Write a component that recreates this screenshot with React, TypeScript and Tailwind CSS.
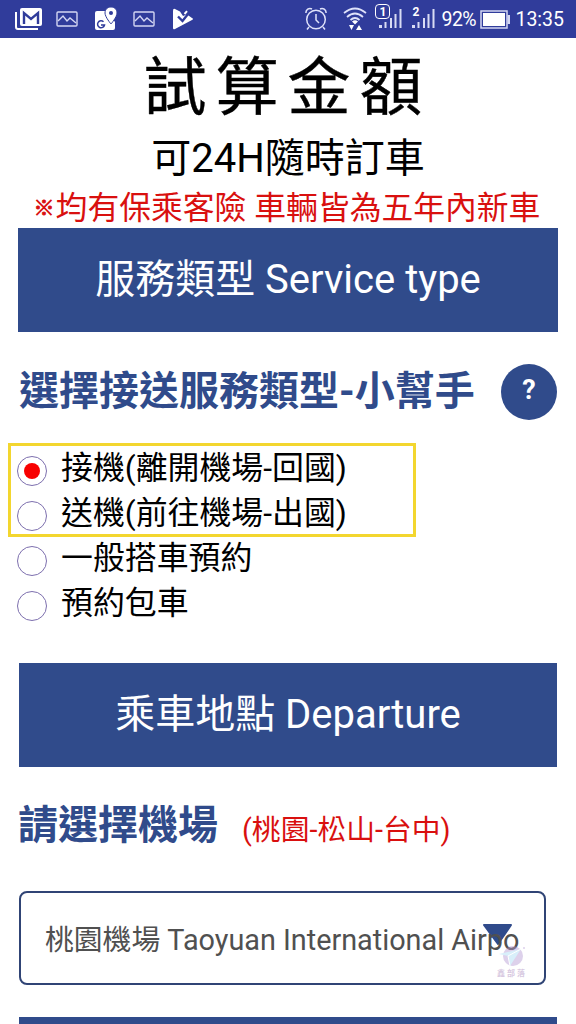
import type { ReactNode } from 'react';
import clsx from 'clsx';

const serviceTypes = [
  { id: 'pickup', label: '接機(離開機場-回國)' },
  { id: 'dropoff', label: '送機(前往機場-出國)' },
  { id: 'ride', label: '一般搭車預約' },
  { id: 'charter', label: '預約包車' },
];

export default function App() {
  return (
    <div className="h-[1024px] w-[576px] overflow-hidden bg-white font-['Roboto','Noto_Sans_CJK_TC',sans-serif] text-black">
      <StatusBar />

      <header className="flex flex-col items-center whitespace-nowrap pt-[10px]">
        <h1 className="pt-[2px] pr-px text-[63px] leading-[76px] tracking-[9px] [-webkit-text-stroke:0.4px]">試算金額</h1>
        <p className="mt-[11px] text-[40px] leading-[44px]">可24H隨時訂車</p>
        <p className="mt-[7px] flex pr-[2px] text-[31.8px] leading-[40px] text-[#d9100f]">
          <span className="mr-px w-[21px] text-[21px] [-webkit-text-stroke:0.8px]">※</span>
          均有保乘客險 車輛皆為五年內新車
        </p>
      </header>

      <main className="pl-[19px] pr-[19px]">
        <div className="-mx-px">
          <Banner>服務類型 Service type</Banner>
        </div>

        <div className="mt-[32px] flex h-[56px] items-center justify-between">
          <h2 className="whitespace-nowrap text-[40px] font-bold leading-[56px] text-[#304b8b]">
            選擇接送服務類型-小幫手
          </h2>
          <button className="flex h-14 w-14 items-center justify-center rounded-full bg-[#304b8b] pb-1 text-[27px] font-bold text-white">
            ?
          </button>
        </div>

        {/* First two options are framed together */}
        <div className="relative mt-[25px] h-[180px]">
          <div className="absolute -left-[11px] -top-[2px] h-[94px] w-[408px] border-3 border-[#f3d62e]" />
          {serviceTypes.map((type, i) => (
            <RadioRow key={type.id} label={type.label} checked={i === 0} />
          ))}
        </div>

        <div className="mt-[38px]">
          <Banner>乘車地點 Departure</Banner>
        </div>

        <div className="mt-[31px] flex h-[56px] items-center whitespace-nowrap">
          <h2 className="-ml-px text-[40px] font-bold leading-[56px] text-[#304b8b]">請選擇機場</h2>
          <span className="ml-[24px] mt-[8px] text-[28.8px] leading-[40px] text-[#d9100f]">(桃園-松山-台中)</span>
        </div>

        <div className="relative mt-[37px] flex h-[94px] w-[527px] items-center rounded-lg border-2 border-[#304475] pl-6">
          <svg className="absolute left-[461px] top-[31px] h-[22px] w-[32px]" viewBox="0 0 32 22">
            <path d="M2 1H29L16 20Z" fill="#304b8b" stroke="#304b8b" strokeWidth="2" strokeLinejoin="round" />
          </svg>
          <span className="relative whitespace-nowrap pt-[5px] text-[28.8px] text-[#505050]">
            桃園機場 Taoyuan International Airpo
          </span>
          <Watermark />
        </div>

        <div className="mt-[32px] h-[7px] bg-[#304b8b]" />
      </main>
    </div>
  );
}

function Banner({ children }: { children: ReactNode }) {
  return (
    <div className="flex h-[104px] items-center justify-center whitespace-nowrap bg-[#304b8b] text-[40px] text-white">
      {children}
    </div>
  );
}

function RadioRow({ label, checked }: { label: string; checked: boolean }) {
  return (
    <label className="relative flex h-[45px] items-center">
      <span className="-ml-[2px] mt-[6px] flex h-[30px] w-[30px] items-center justify-center rounded-full border-[1.5px] border-[#7d6fae]">
        <span className={clsx('h-4 w-4 rounded-full', checked && 'bg-[#f80000]')} />
      </span>
      <span className="ml-[14px] mt-px whitespace-nowrap text-[31.9px] leading-[44px]">{label}</span>
    </label>
  );
}

function Watermark() {
  return (
    <div className="absolute left-[475px] top-[51px] flex w-[32px] flex-col items-center opacity-45">
      <svg className="h-[25px] w-[28px]" viewBox="0 0 28 25">
        <circle cx="15" cy="12" r="10" fill="#b49ad4" />
        <path d="M1 10L23 5L12 22L10 12Z" fill="#a9dcf5" />
        <path d="M10 12L23 5M10 12L12 22" stroke="#fff" strokeWidth="1" />
        <circle cx="26" cy="4" r="1" fill="#b49ad4" />
      </svg>
      <span className="whitespace-nowrap text-[8px] font-bold leading-[10px] tracking-[2px] text-[#a988bd]">鑫部落</span>
    </div>
  );
}

function PhotoIcon() {
  return (
    <svg className="h-4 w-[22px]" viewBox="0 0 22 16" fill="none" stroke="#d3d6f3" strokeWidth="1.4">
      <rect x="1" y="1" width="20" height="14" rx="1" />
      <path d="M2 10L7 5L11 10L14 7L20 12" />
    </svg>
  );
}

function SignalBars() {
  return (
    <svg className="h-5 w-6" viewBox="0 0 24 20" fill="#d8dbf4">
      <rect x="0" y="16" width="3" height="3" />
      <rect x="5.5" y="13" width="2" height="6" />
      <rect x="11" y="9" width="2" height="10" />
      <rect x="15.5" y="5" width="2" height="14" />
      <rect x="20.5" y="0" width="2" height="19" />
    </svg>
  );
}

function StatusBar() {
  return (
    <div className="flex h-[38px] items-center justify-between bg-[#303c9b] pl-[14px] pr-[12px] text-white">
      <div className="flex items-center">
        {/* Gmail */}
        <svg className="h-6 w-7" viewBox="0 0 28 24">
          <path d="M2 5V20Q2 22 4 22H24" fill="none" stroke="#fff" strokeWidth="2" />
          <rect x="6" y="1" width="22" height="18" rx="2" fill="#fff" />
          <path d="M10 17V6L17 12L24 6V17" fill="none" stroke="#303c9b" strokeWidth="2.4" />
        </svg>
        <span className="ml-[14px] flex"><PhotoIcon /></span>
        {/* Maps */}
        <svg className="ml-[16px] h-6 w-[24px]" viewBox="0 0 24 24">
          <path d="M3 4H13L21 15V21Q21 23 19 23H3Q1 23 1 21V6Q1 4 3 4Z" fill="#fff" />
          <path d="M17 0C20.5 0 23 2.5 23 6C23 10 17 17 17 17C17 17 11 10 11 6C11 2.5 13.5 0 17 0Z" fill="#fff" stroke="#303c9b" strokeWidth="1" />
          <circle cx="17" cy="6" r="2" fill="#303c9b" />
          <path d="M9.5 14.7A3.5 3.5 0 1 0 10.5 18H7" fill="none" stroke="#303c9b" strokeWidth="1.5" />
        </svg>
        <span className="ml-[15px] flex"><PhotoIcon /></span>
        {/* Play */}
        <svg className="ml-[17px] h-6 w-[22px]" viewBox="0 0 22 24">
          <path d="M3 2L8 4.500L11 9L15 7.500L20 11Q22 12 20 13L3 22Q1 23 1 21V4Q1 1 3 2Z" fill="#fff" />
          <path d="M6 9.500L10.500 14L18 4.500" fill="none" stroke="#303c9b" strokeWidth="2.4" />
          <path d="M12.500 7L15 4.200" stroke="#fff" strokeWidth="2" />
        </svg>
      </div>

      <div className="flex items-center">
        <svg className="h-6 w-[22px]" viewBox="0 0 22 24" fill="none" stroke="#dfe2fa" strokeWidth="1.5">
          <circle cx="11" cy="12.5" r="9.3" />
          <path d="M11 7V13L14 16M1 6A4 4 0 0 1 7 2M21 6A4 4 0 0 0 15 2M4 20L2 22.5M18 20L20 22.5" />
        </svg>
        <svg className="ml-[16px] h-6 w-6" viewBox="0 0 24 24" fill="none" stroke="#dfe2fa" strokeWidth="1.7">
          <path d="M1 6Q12 -3 23 6M4 10Q12 3 20 10M7.5 13Q12 9 16.5 13" />
          <path d="M9 14.5Q12 12 15 14.5L12 17.5Z" fill="#fff" stroke="none" />
          <path d="M6 18H11L8.5 23ZM13 23H19L16 18Z" fill="#fff" stroke="none" />
        </svg>
        <div className="relative ml-[12px] flex h-[28px] w-[26px] items-start pt-[4px]">
          <SignalBars />
          <span className="absolute -left-[4px] -top-[1px] flex h-[15px] w-[15px] items-center justify-center rounded-[4px] border border-white bg-[#303c9b] text-[12px] font-bold leading-none">1</span>
        </div>
        <div className="relative ml-[7px] flex h-[28px] w-[24px] items-start pt-[4px]">
          <SignalBars />
          <span className="absolute left-0 top-0 text-[12px] font-bold leading-[14px]">2</span>
        </div>
        <span className="ml-[5px] w-[36px] pt-[2px] text-[19.5px] leading-none tracking-[-0.5px]">92%</span>
        <svg className="ml-[3px] h-[19px] w-[30px]" viewBox="0 0 30 19">
          <rect x="1" y="1" width="26" height="17" fill="none" stroke="#d3d6f3" strokeWidth="1.5" />
          <rect x="3" y="3" width="22" height="13" fill="#fff" />
          <rect x="27.5" y="5" width="2.5" height="9" fill="#d3d6f3" />
        </svg>
        <span className="ml-[5px] pt-[2px] text-[19.5px] leading-none">13:35</span>
      </div>
    </div>
  );
}
